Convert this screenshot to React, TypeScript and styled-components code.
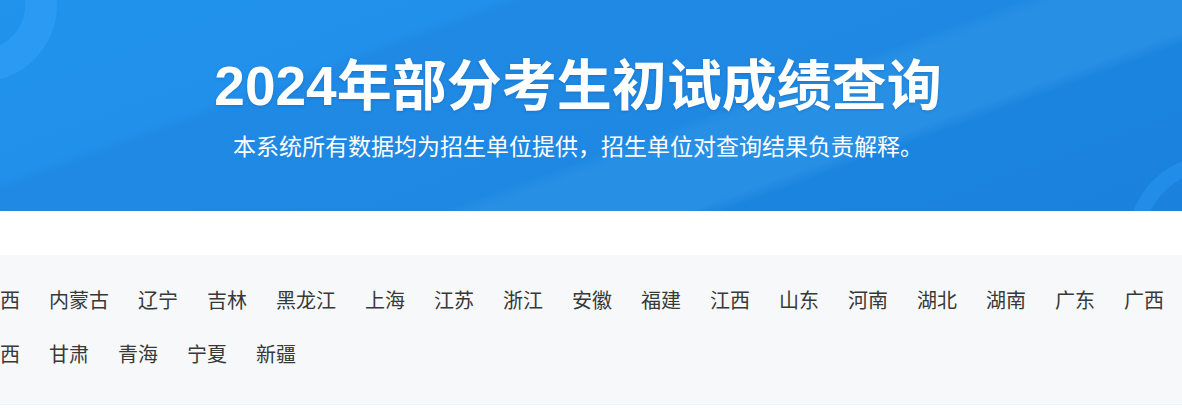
import * as React from 'react'
import styled, { createGlobalStyle } from 'styled-components'

const GlobalStyle = createGlobalStyle`
  html, body {
    margin: 0;
    padding: 0;
    background: #fff;
    font-family: "Liberation Sans", "Noto Sans CJK SC", sans-serif;
    overflow: hidden;
  }
`

const Page = styled.div`
  width: 1182px;
  display: flex;
  flex-direction: column;
`

const Banner = styled.header`
  position: relative;
  height: 211px;
  overflow: hidden;
  display: flex;
  flex-direction: column;
  align-items: center;
  padding: 56px 26px 0 0;
  box-sizing: border-box;
  background:
    linear-gradient(160deg,
      #2193ed 0%,
      #2190ea 28%,
      #1f89e3 30%,
      #1f88e2 58%,
      #2790e5 60%,
      #278fe4 72%,
      #1b84de 74%,
      #1a82dd 100%);

  /* decorative rings */
  &::before {
    content: '';
    position: absolute;
    left: -97px;
    top: -72px;
    width: 90px;
    height: 90px;
    border-radius: 50%;
    border: 32px solid rgba(60, 170, 255, 0.33);
  }

  &::after {
    content: '';
    position: absolute;
    right: -118px;
    top: 155px;
    width: 140px;
    height: 140px;
    border-radius: 50%;
    border: 16px solid rgba(50, 165, 255, 0.33);
  }
`

const Title = styled.h1`
  position: relative;
  z-index: 1;
  margin: 0;
  font-family: "Liberation Sans", "Noto Sans CJK SC", sans-serif;
  font-size: 55px;
  line-height: 60px;
  font-weight: 700;
  color: #fff;
  text-shadow: 0 1px 3px rgba(0, 40, 110, 0.2);
  white-space: nowrap;
`

const Subtitle = styled.p`
  position: relative;
  z-index: 1;
  margin: 14px 0 0;
  font-family: "Noto Sans CJK SC", sans-serif;
  font-size: 23px;
  line-height: 30px;
  color: #fff;
  white-space: nowrap;
`

const Spacer = styled.div`
  height: 44px;
`

const Panel = styled.section`
  background: #f6f8fa;
  padding: 18px 0 23px;
  overflow: hidden;
  border-bottom: 1px solid #f0f2f4;
`

const Row = styled.ul`
  list-style: none;
  margin: 0 0 0 -20px;
  padding: 0;
  display: flex;
  gap: 29px;
  white-space: nowrap;
`

const Item = styled.li`
  font-family: "Noto Sans CJK SC", sans-serif;
  font-size: 20px;
  line-height: 54px;
  color: #383838;
  cursor: pointer;
`

const rows = [
  ['山西', '内蒙古', '辽宁', '吉林', '黑龙江', '上海', '江苏', '浙江', '安徽', '福建', '江西', '山东', '河南', '湖北', '湖南', '广东', '广西'],
  ['陕西', '甘肃', '青海', '宁夏', '新疆'],
]

const App = () => (
  <Page>
    <GlobalStyle />
    <Banner>
      <Title>2024年部分考生初试成绩查询</Title>
      <Subtitle>本系统所有数据均为招生单位提供，招生单位对查询结果负责解释。</Subtitle>
    </Banner>
    <Spacer />
    <Panel>
      {rows.map((row, i) => (
        <Row key={i}>
          {row.map(name => (
            <Item key={name}>{name}</Item>
          ))}
        </Row>
      ))}
    </Panel>
  </Page>
)

export default App
